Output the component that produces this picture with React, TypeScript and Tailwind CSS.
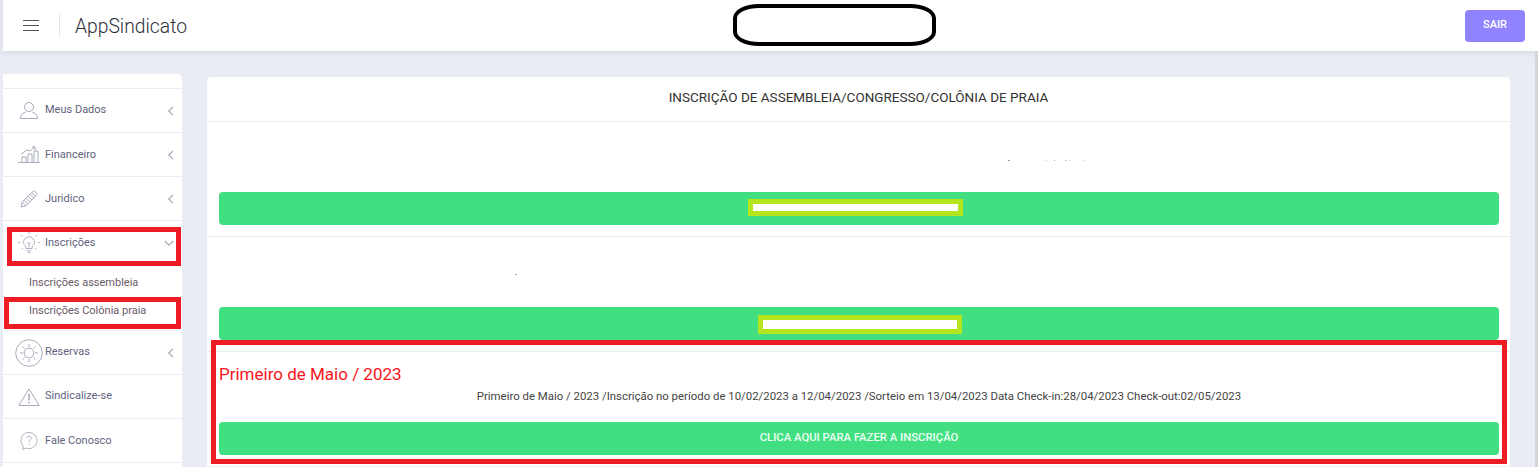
import React from "react";

const ic = { fill: "none", stroke: "#a5abb9", strokeWidth: 1 } as const;

function IconUser() {
  return (
    <svg width="18" height="17" viewBox="0 0 18 17" {...ic}>
      <ellipse cx="9" cy="5" rx="4.500" ry="4.500" />
      <path d="M.5 16.500c0-3.800 2.500-5.300 5.200-6.500M17.500 16.500c0-3.800-2.500-5.300-5.200-6.500M.5 16.500h17" />
    </svg>
  );
}
function IconChart() {
  return (
    <svg width="22" height="17" viewBox="0 0 22 17" {...ic}>
      <path d="M0 16.500h22M4 16V11h4v5M10 16V8h4v8M16 16V5h4v11" />
      <path d="M3 8l6-4 3 1 5-4M14 .8l3.200.2-.2 3" />
    </svg>
  );
}
function IconPencil() {
  return (
    <svg width="18" height="18" viewBox="0 0 18 18" {...ic}>
      <path d="M1 17l1.200-5L12.500 1.700c.8-.8 2-.8 2.800 0l1 1c.8.8.8 2 0 2.800L6 15.800z" />
      <path d="M2.200 12L6 15.800M4 10.200l3.800 3.800M6 8.200l3.800 3.800M8 6.200l3.800 3.800M10 4.200l3.800 3.800M11.700 2.500l3.800 3.800" />
    </svg>
  );
}
function IconBulb() {
  return (
    <svg width="22" height="22" viewBox="0 0 24 24" {...ic}>
      <path d="M8.500 18v-2.500C7 14.400 6 12.800 6 11.200a6 6 0 0 1 12 0c0 1.600-1 3.200-2.500 4.300V18zM9.500 20.500h5M10.500 22.500h3" />
      <path d="M10 11l2 2 2-2M12 13v4" />
      <path d="M12 0v2.500M3 3l2 2M21 3l-2 2M0 11.500h2.500M21.500 11.500H24M4 19l1.500-1.500M20 19l-1.500-1.500" />
    </svg>
  );
}
function IconSun() {
  return (
    <svg width="28" height="28" viewBox="0 0 28 28" {...ic}>
      <circle cx="14" cy="14" r="13.300" />
      <circle cx="14" cy="14" r="4.800" />
      <path d="M14 5v3M14 20v3M5 14h3M20 14h3M7.600 7.600l2.100 2.100M18.300 18.300l2.100 2.100M20.400 7.600l-2.100 2.100M9.700 18.300l-2.100 2.100" />
    </svg>
  );
}
function IconWarn() {
  return (
    <svg width="22" height="18" viewBox="0 0 22 18" {...ic}>
      <path d="M11 1L.8 17.500h20.400z" />
      <path d="M11 6v6.500M11 14v1.500" strokeWidth="1.500" />
    </svg>
  );
}
function IconHelp() {
  return (
    <svg width="18" height="20" viewBox="0 0 20 21" {...ic}>
      <path d="M10 1a9 9 0 0 1 0 18c-1.200 0-2.300-.2-3.300-.6L3 20l.6-3.600A9 9 0 0 1 10 1z" />
      <path d="M7.500 7.500C7.700 6 8.800 5.300 10 5.300c1.500 0 2.600 1 2.600 2.200 0 1.800-2.600 2-2.600 4M10 13.200v1.500" />
    </svg>
  );
}
function Chevron({ down }: { down?: boolean }) {
  return (
    <svg width="10" height="10" viewBox="0 0 10 10" fill="none" stroke="#a3a9b6" strokeWidth="1.200">
      <path d={down ? "M.8 3l4.200 4.200L9.200 3" : "M7 .8L2.800 5 7 9.200"} />
    </svg>
  );
}

function Row({ icon, label, chevron, low }: { icon: React.ReactNode; label: string; chevron?: boolean; low?: boolean }) {
  return (
    <div className="flex h-[44px] items-center border-b border-[#e9ecf3] pr-[6px] text-[11px] text-[#5f5f7d]">
      <div className="flex w-[42px] shrink-0 items-center justify-center pl-[10px]">{icon}</div>
      <span className={low ? "flex-1 pt-[2px]" : "flex-1"}>{label}</span>
      {chevron && <Chevron />}
    </div>
  );
}

function GreenButton({ children }: { children?: React.ReactNode }) {
  return (
    <div className="relative flex h-[33px] items-center justify-center rounded-[4px] bg-[#42df82] text-[11.300px] font-medium text-[#eafff2]">
      {children}
    </div>
  );
}

function Speck({ className }: { className: string }) {
  return <span className={className} />;
}

export default function App() {
  return (
    <div
      className="relative h-[467px] w-[1538px] overflow-hidden bg-[#e9ecf3]"
      style={{ fontFamily: '"Roboto", "Liberation Sans", sans-serif' }}
    >
      <header className="ml-[3px] flex h-[51px] items-center bg-white pr-[13px] shadow-[0_1px_6px_rgba(160,170,190,0.35)]">
        <div className="ml-[20px] flex w-[16px] flex-col gap-[4px]">
          <div className="h-px bg-[#555]" />
          <div className="h-px bg-[#555]" />
          <div className="h-px bg-[#555]" />
        </div>
        <div className="ml-[20px] h-[24px] w-px bg-[#e8e8ec]" />
        <div className="ml-[15px] pt-[3px] text-[19.300px] font-light text-[#2f2f38]">AppSindicato</div>
        <div className="ml-auto flex h-[32px] w-[60px] items-center justify-center rounded-[4px] bg-[#8f83ff] text-[11px] font-medium text-white">
          SAIR
        </div>
      </header>

      <div className="flex">
        <aside className="ml-[3px] mt-[23px] h-[393px] w-[179px] shrink-0 rounded-tr-[4px] bg-white">
          <div className="h-[15px] border-b border-[#e9ecf3]" />
          <Row icon={<IconUser />} label="Meus Dados" chevron />
          <Row icon={<IconChart />} label="Financeiro" chevron low />
          <Row icon={<IconPencil />} label="Juridico" chevron low />
          <div className="border-b border-[#e9ecf3] pb-[5px] text-[11px]">
            <div className="flex h-[44px] items-center pr-[8px] text-[#5f5f7d]">
              <div className="flex w-[42px] shrink-0 items-center justify-center pl-[9px]">
                <IconBulb />
              </div>
              <span className="flex-1">Inscrições</span>
              <Chevron down />
            </div>
            <div className="mt-[4px] flex h-[28px] items-center pl-[26px] text-[#6a5a68]">Inscrições assembleia</div>
            <div className="flex h-[28px] items-center pl-[26px] text-[#6a5a68]">Inscrições Colônia praia</div>
          </div>
          <Row icon={<IconSun />} label="Reservas" chevron />
          <Row icon={<IconWarn />} label="Sindicalize-se" />
          <Row icon={<IconHelp />} label="Fale Conosco" low />
        </aside>

        <main className="ml-[25px] mt-[26px] h-[389px] w-[1303px] rounded-t-[4px] bg-white">
          <div className="flex h-[45px] items-center justify-center border-b border-[#ececec] pb-[3px] text-[13.500px] text-[#333]">
            INSCRIÇÃO DE ASSEMBLEIA/CONGRESSO/COLÔNIA DE PRAIA
          </div>
          <section className="relative h-[115px] border-b border-[#ececec] pl-[12px] pr-[11px] pt-[70px]">
            <Speck className="absolute left-[103px] top-[28px] h-px w-px bg-[#dddddd]" />
            <Speck className="absolute left-[801px] top-[38px] h-px w-[2px] bg-[#999999]" />
            <Speck className="absolute left-[838px] top-[38px] h-px w-[2px] bg-[#e4e4e4]" />
            <Speck className="absolute left-[847px] top-[38px] h-px w-px bg-[#aaaaaa]" />
            <Speck className="absolute left-[858px] top-[38px] h-px w-[2px] bg-[#cccccc]" />
            <Speck className="absolute left-[862px] top-[38px] h-px w-[2px] bg-[#e4e4e4]" />
            <Speck className="absolute left-[876px] top-[38px] h-px w-[2px] bg-[#e4e4e4]" />
            <GreenButton>
              <div className="absolute left-[529px] top-[7px] h-[17px] w-[215px] border-[5px] border-[#b5e61d] bg-white" />
            </GreenButton>
          </section>
          <section className="relative h-[115px] border-b border-[#ececec] pl-[12px] pr-[11px] pt-[70px]">
            <Speck className="absolute left-[308px] top-[37px] h-px w-[2px] bg-[#aaaaaa]" />
            <GreenButton>
              <div className="absolute left-[539px] top-[8px] h-[19px] w-[204px] border-[5px] border-[#b5e61d] bg-white" />
            </GreenButton>
          </section>
          <section className="pl-[12px] pr-[11px]">
            <div className="mt-[11px] text-[17px] leading-[22px] text-[#f8141c]">Primeiro de Maio / 2023</div>
            <div className="mt-[3px] text-center text-[11.400px] leading-[16px] text-[#444]">
              Primeiro de Maio / 2023 /Inscrição no período de 10/02/2023 a 12/04/2023 /Sorteio em 13/04/2023 Data Check-in:28/04/2023 Check-out:02/05/2023
            </div>
            <div className="mt-[18px]">
              <GreenButton>CLICA AQUI PARA FAZER A INSCRIÇÃO</GreenButton>
            </div>
          </section>
        </main>
      </div>

      <div className="absolute bottom-0 right-0 top-[51px] w-[3px] bg-[#d6d6d6]" />

      {/* hand-drawn annotations over the screenshot */}
      <div className="absolute left-[733px] top-[4px] h-[42px] w-[203px] rounded-[26px/14px] border-[4px] border-black" />
      <div className="absolute left-[7px] top-[227px] h-[39px] w-[174px] border-[5px] border-[#ed1c24]" />
      <div className="absolute left-[4px] top-[297px] h-[32px] w-[177px] border-[5px] border-[#ed1c24]" />
      <div className="absolute left-[211px] top-[340px] h-[124px] w-[1296px] border-[5px] border-[#ed1c24]" />
    </div>
  );
}
